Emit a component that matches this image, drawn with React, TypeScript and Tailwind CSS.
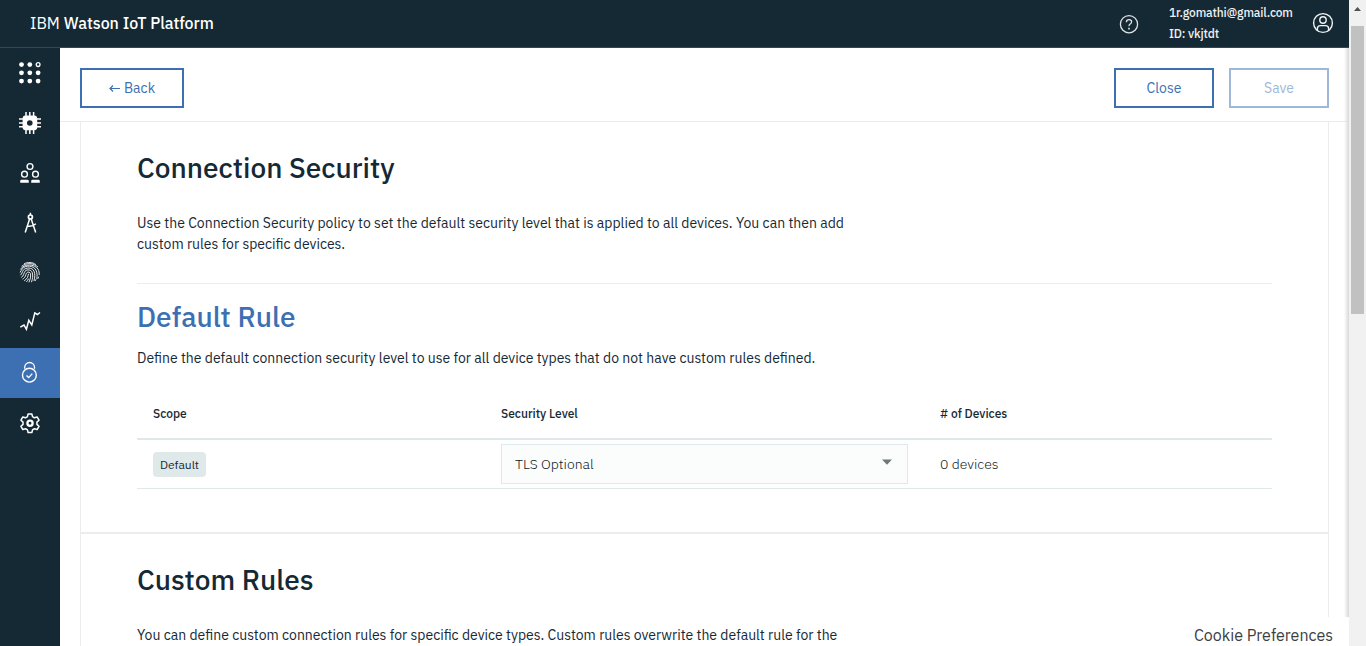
import React from "react";

type IconProps = { children: React.ReactNode; active?: boolean; label: string };

function NavItem({ children, active, label }: IconProps) {
  return (
    <a
      aria-label={label}
      className={
        active
          ? "flex h-[50px] w-full items-center justify-center bg-[#3d70b2]"
          : "flex h-[50px] w-full items-center justify-center"
      }
    >
      <svg width="24" height="24" viewBox="0 0 24 24" fill="none" stroke="#fff" strokeWidth="1.3">
        {children}
      </svg>
    </a>
  );
}

function Sidebar() {
  return (
    <nav className="w-[60px] shrink-0 bg-[#152934]">
      <NavItem label="Apps">
        <g fill="#fff" stroke="none">
          <circle cx="3.5" cy="3.6" r="2.4" />
          <circle cx="11.8" cy="3.6" r="2.4" />
          <circle cx="3.5" cy="11.8" r="2.4" />
          <circle cx="11.8" cy="11.8" r="2.4" />
          <circle cx="20.1" cy="11.8" r="2.4" />
          <circle cx="3.5" cy="20.1" r="2.4" />
          <circle cx="11.8" cy="20.1" r="2.4" />
          <circle cx="20.1" cy="20.1" r="2.4" />
        </g>
        <circle cx="20.1" cy="3.6" r="1.9" />
      </NavItem>
      <NavItem label="Devices">
        <path d="M8 1v22M11.8 1v22M15.6 1v22M1 8h22M1 11.9h22M1 15.7h22" strokeWidth="1.5" />
        <rect x="4.6" y="4.6" width="14.6" height="14.6" rx="3" fill="#fff" stroke="none" />
        <circle cx="11.8" cy="12" r="2.8" fill="#152934" stroke="none" />
      </NavItem>
      <NavItem label="Members">
        <circle cx="12" cy="5.5" r="2.9" strokeWidth="1.4" />
        <circle cx="6.5" cy="13.2" r="2.9" strokeWidth="1.4" />
        <circle cx="17.5" cy="13.2" r="2.9" strokeWidth="1.4" />
        <path d="M2.2 21.8v-1.6q0-1.4 1.4-1.4h5.8q1.4 0 1.4 1.4v1.6zM13.2 21.8v-1.6q0-1.4 1.4-1.4h5.8q1.4 0 1.4 1.4v1.6z" fill="#fff" stroke="none" />
      </NavItem>
      <NavItem label="Designs">
        <circle cx="12.4" cy="6" r="2" strokeWidth="1.7" />
        <path d="M12.4 1.7v2.5M11.6 7.9 7.2 21.5M13.2 7.9l4.5 13.6M9.2 14.9q5 1 8.7-2.1" strokeWidth="1.5" />
      </NavItem>
      <NavItem label="Identity">
        <g strokeWidth="1" opacity=".9">
          <path d="M6 2.9C9.5.9 14.8 1 17.8 3.6M3.6 5.4C8 1.6 16 1.6 20 6.2M2.4 8.4C6 2.6 16.5 2.6 20 8.2c1 1.7 1.3 3.6 1.2 5.8" />
          <path d="M2.1 11.5c.7-1.2 1.2-2.6 2.2-3.7C7.6 4 15.4 4.1 18 9.3c1.2 2.5 1.3 5.2.8 8.6" />
          <path d="M2.3 14.2c1.8-1.2 1.8-3.4 3-5C8 6 14.4 6.3 16 10.2c1.2 2.9.9 5.8 0 9.8" />
          <path d="M3.2 16.4c2.9-1.4 2.3-4.3 3.9-6.2 2-2.3 6.3-1.6 7.2 1.6.8 2.9.3 5.9-.8 9.4" />
          <path d="M4.5 18.2c3.4-1.8 2.9-4.6 4.2-6.3 1.2-1.5 3.5-.9 3.8 1 .4 2.6-.3 5.5-1.6 8.4" />
          <path d="M6.2 19.8c3.2-2 3.8-4.1 4.3-7M8.4 20.9c1.1-1.1 1.7-2 2.1-3.2M20.7 15.6q-.4 1.4-.9 2.2M18 18.2q-.4 1.2-.9 1.9" />
        </g>
      </NavItem>
      <NavItem label="Usage">
        <path d="M2.3 16.2 6 14l2.4 4.3 2.4-9 3 4.6 3-12 2.6 1.6 2.6-2" strokeWidth="1.5" />
      </NavItem>
      <NavItem label="Security" active>
        <path d="M6.7 7.8V6.2a4.9 4.7 0 0 1 9.8 0v1.6" strokeWidth="1.3" />
        <circle cx="11.4" cy="14.2" r="6.9" strokeWidth="1.4" />
        <path d="m8.5 14.5 2.2 2.1 3.6-4" strokeWidth="1.4" />
      </NavItem>
      <NavItem label="Settings">
        <path
          transform="translate(.7 .5) scale(.94)"
          d="M10 2.6h4l.7 2.9 2 1.2 2.9-.9 2 3.5-2.2 2v2.4l2.2 2-2 3.5-2.9-.9-2 1.2-.7 2.9h-4l-.7-2.9-2-1.2-2.9.9-2-3.5 2.2-2v-2.4l-2.2-2 2-3.5 2.9.9 2-1.2z"
          strokeWidth="1.6"
          strokeLinejoin="round"
        />
        <circle cx="12" cy="12.2" r="2.6" strokeWidth="2.3" />
      </NavItem>
    </nav>
  );
}

function Header() {
  return (
    <header className="flex h-12 shrink-0 items-center border-b border-[#3c4646] bg-[#152934] text-white">
      <h1 className="flex-1 pb-px pl-[30px] text-base leading-6">
        IBM <span className="font-medium">Watson IoT Platform</span>
      </h1>
      <svg className="mr-[30px]" width="20" height="20" viewBox="0 0 20 20" fill="none" stroke="#dfe3e6" strokeWidth="1.3">
        <circle cx="10" cy="10.2" r="8.6" />
        <path d="M7.4 8.2q0-2.6 2.6-2.6t2.6 2.2q0 1.4-1.4 2.2T10 12.2" />
        <path d="M9.2 14.6h1.6" strokeWidth="1.6" />
      </svg>
      <div className="w-[143px] pb-px text-xs font-medium leading-[21px] tracking-[-0.15px] text-[#eef1f3]">
        <p className="whitespace-nowrap">1r.gomathi@gmail.com</p>
        <p>ID: vkjtdt</p>
      </div>
      <svg className="mb-px mr-[15px]" width="22" height="22" viewBox="0 0 22 22" fill="none" stroke="#f0f3f5" strokeWidth="1.4">
        <circle cx="11" cy="11" r="9.4" />
        <circle cx="11" cy="8" r="3.2" />
        <path d="M5.4 18.4v-1.8q0-3 3-3h5.2q3 0 3 3v1.8" />
      </svg>
    </header>
  );
}

function Toolbar() {
  return (
    <div className="flex h-[74px] shrink-0 items-start border-b border-[#ececec] px-5 pt-5 text-sm text-[#3d70b2]">
      <button className="flex h-10 w-[104px] items-center justify-center gap-1 border-2 border-[#3d70b2]">
        <svg width="11" height="9" viewBox="0 0 11 9" fill="none" stroke="#3d70b2" strokeWidth="1.2">
          <path d="M11 4.5H1M4 1.5l-3 3 3 3" />
        </svg>
        <span>Back</span>
      </button>
      <button className="ml-auto h-10 w-[100px] border-2 border-[#3d70b2]">Close</button>
      <button className="ml-[15px] h-10 w-[100px] border-2 border-[#9eb8d9] text-[#9eb8d9]">Save</button>
    </div>
  );
}

function DefaultRuleTable() {
  return (
    <div className="mt-5 text-sm">
      <div className="grid h-[51px] grid-cols-[348px_439px_348px] items-center border-b-2 border-[#dfe9e9] text-xs font-medium">
        <div className="pl-4">Scope</div>
        <div className="pl-4">Security Level</div>
        <div className="pl-4">
          # of Devices
        </div>
      </div>
      <div className="grid h-[49px] grid-cols-[348px_439px_348px] items-center border-b border-[#dfe9e9]">
        <div className="pl-4">
          <span className="flex h-[25px] w-[53px] items-center justify-center rounded-sm bg-[#dfe9e9] pt-px text-xs">Default</span>
        </div>
        <div className="px-4">
          <div className="flex h-10 items-center justify-between border border-[#dfe9e9] bg-[#fbfdfd] pl-[13px] pr-[15px]">
            <span className="font-light text-[#0b1a24]">TLS Optional</span>
            <svg className="-mt-1" width="10" height="6" viewBox="0 0 10 6" fill="#6f7878">
              <path d="M0 .5h10L5 5.7z" />
            </svg>
          </div>
        </div>
        <div className="pl-4 font-light text-[#0b1a24]">0 devices</div>
      </div>
    </div>
  );
}

function Scrollbar() {
  return (
    <div className="flex w-[17px] shrink-0 flex-col items-center bg-[#f1f1f1]">
      <svg className="mt-[7px]" width="7" height="4" viewBox="0 0 7 4" fill="#505050">
        <path d="M0 4h7L3.5 0z" />
      </svg>
      <div className="mt-[15px] h-[288px] w-[13px] bg-[#c1c1c1]" />
    </div>
  );
}

export default function App() {
  return (
    <div className="flex h-[646px] w-[1366px] overflow-hidden bg-white font-['IBM_Plex_Sans',Roboto,sans-serif] text-[#152935]">
      <div className="relative flex min-w-0 flex-1 flex-col">
        <Header />
        <div className="flex min-h-0 flex-1">
          <Sidebar />
          <div className="flex min-w-0 flex-1 flex-col">
            <Toolbar />
            <main className="mx-5 min-h-0 flex-1 overflow-hidden border-x border-[#ececec]">
              <section className="h-[412px] border-b-2 border-[#ececec] px-14 pt-[28px]">
                <h2 className="text-[28px] font-medium leading-9">Connection Security</h2>
                <p className="mt-[27px] w-[760px] text-sm leading-[21px]">
                  <span className="block">Use the Connection Security policy to set the default security level that is applied to all devices. You can then add</span>
                  <span className="block">custom rules for specific devices.</span>
                </p>
                <hr className="mt-7 border-[#ececec]" />
                <h2 className="mt-[15px] text-[28px] font-medium leading-9 text-[#3d70b2]">Default Rule</h2>
                <p className="mt-[13px] text-sm leading-[21px]">Define the default connection security level to use for all device types that do not have custom rules defined.</p>
                <DefaultRuleTable />
              </section>
              <section className="px-14 pt-[28px]">
                <h2 className="text-[28px] font-medium leading-9">Custom Rules</h2>
                <p className="mt-[27px] text-sm leading-[21px]">You can define custom connection rules for specific device types. Custom rules overwrite the default rule for the</p>
              </section>
            </main>
          </div>
        </div>
        <div className="absolute bottom-0 right-0 top-12 w-[5px] bg-gradient-to-l from-[#d8d8d8] to-transparent" />
        <div className="absolute bottom-0 right-0 flex h-[29px] w-[170px] items-center justify-end bg-white pr-4 pt-[6px] text-base text-[#3c4043]">
          <span>Cookie Preferences</span>
        </div>
      </div>
      <Scrollbar />
    </div>
  );
}
